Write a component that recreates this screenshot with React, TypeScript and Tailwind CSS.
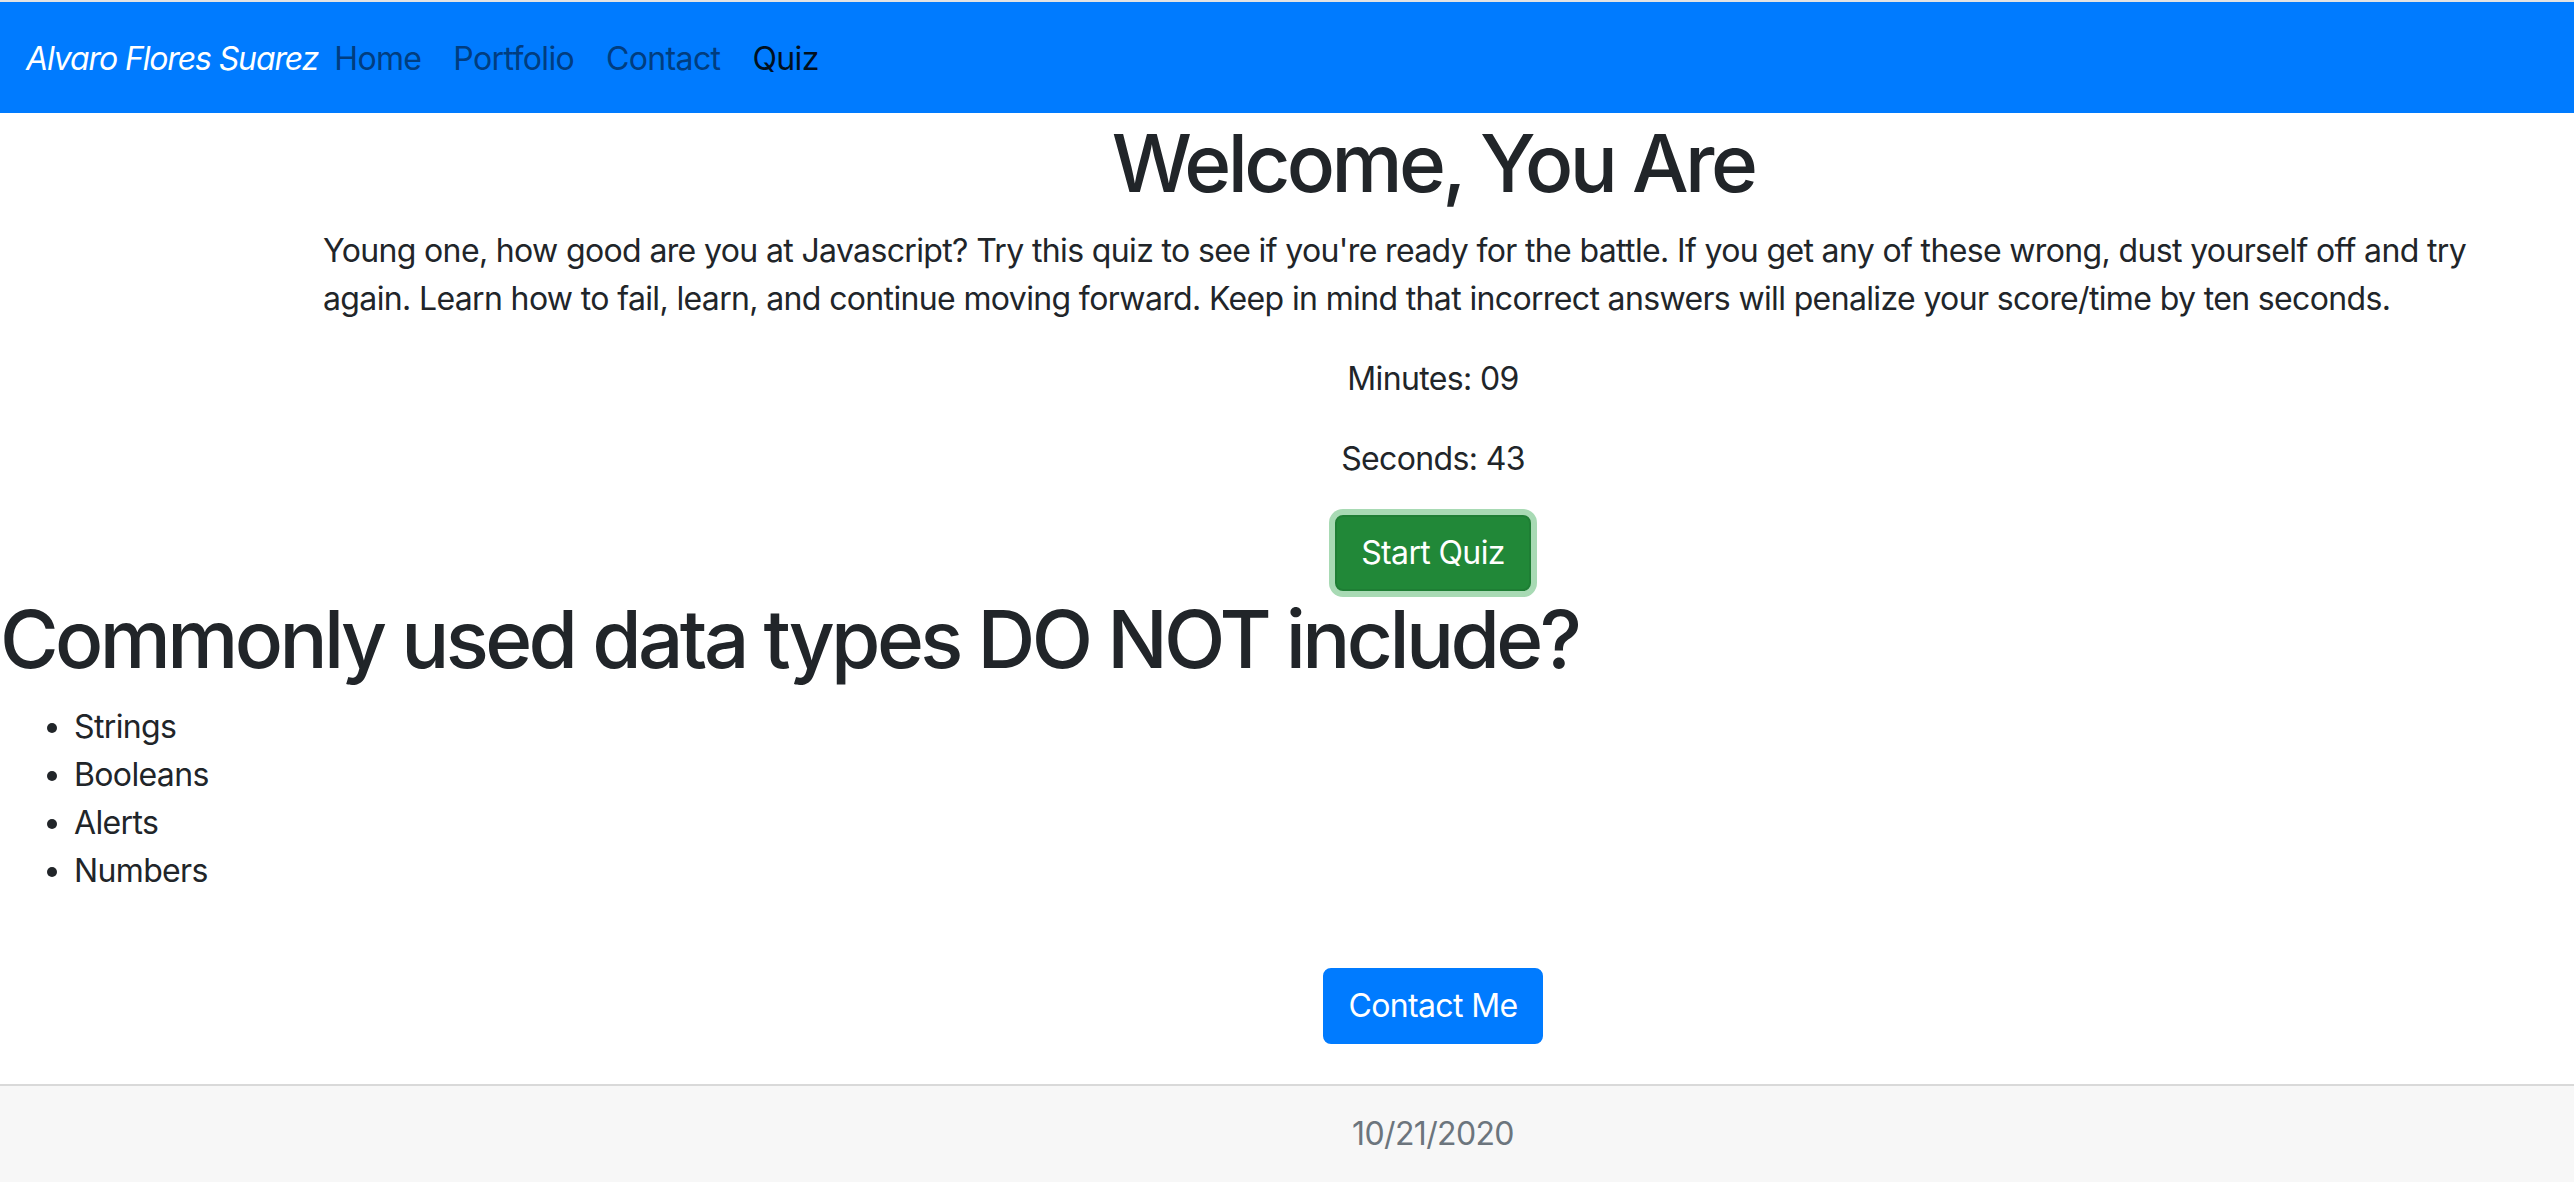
const navLinks = ["Home", "Portfolio", "Contact"];
const answers = ["Strings", "Booleans", "Alerts", "Numbers"];

const App = () => {
  return (
    <div className="min-h-[1196px] bg-white font-[Inter,sans-serif] text-[32px] leading-[48px] tracking-[-0.02em] text-[#212529]">
      <nav className="flex h-[113px] items-center border-t-2 border-[#e3e3e3] bg-[#007bff] px-[26px] pt-[2px]">
        <a href="#" className="italic tracking-[-0.035em] text-white">
          Alvaro Flores Suarez
        </a>
        <ul className="flex">
          {navLinks.map((link) => (
            <li key={link}>
              <a href="#" className="px-[16px] text-[#003d80]">
                {link}
              </a>
            </li>
          ))}
          <li>
            <a href="#" className="px-[16px] text-[#00101f]">
              Quiz
            </a>
          </li>
        </ul>
      </nav>

      <div className="ml-[293px] w-[2280px] px-[30px] text-center">
        <h1 className="mt-[2px] mb-[16px] text-[80px] leading-[96px] font-medium tracking-[-0.045em]">
          Welcome, You Are
        </h1>
        <p className="mb-[32px] text-left">
          Young one, how good are you at Javascript? Try this quiz to see if
          you're ready for the battle. If you get any of these wrong, dust
          yourself off and try again. Learn how to fail, learn, and continue
          moving forward. Keep in mind that incorrect answers will penalize
          your score/time by ten seconds.
        </p>
        <p className="mb-[32px]">Minutes: 09</p>
        <p className="mb-[32px]">Seconds: 43</p>
        <button
          type="button"
          className="rounded-[8px] border-2 border-[#1e7e34] bg-[#218838] px-[24px] py-[12px] text-white shadow-[0_0_0_6px_#a8dab4]"
        >
          Start Quiz
        </button>
      </div>

      <h1 className="mb-[16px] text-[80px] leading-[96px] font-medium tracking-[-0.045em]">
        Commonly used data types DO NOT include?
      </h1>
      <ul className="mb-[32px] list-disc pl-[74px]">
        {answers.map((answer) => (
          <li key={answer}>{answer}</li>
        ))}
      </ul>

      <div className="ml-[293px] w-[2280px] px-[30px] pt-[41px] pb-[40px] text-center">
        <button
          type="button"
          className="rounded-[8px] border-2 border-[#007bff] bg-[#007bff] px-[24px] py-[12px] text-white"
        >
          Contact Me
        </button>
      </div>

      <footer className="border-t-2 border-[#d9d9d9] bg-[#f7f7f7] py-[24px]">
        <div className="ml-[293px] w-[2280px] px-[30px] text-center text-[#6c757d]">
          10/21/2020
        </div>
      </footer>
    </div>
  );
};

export default App;
